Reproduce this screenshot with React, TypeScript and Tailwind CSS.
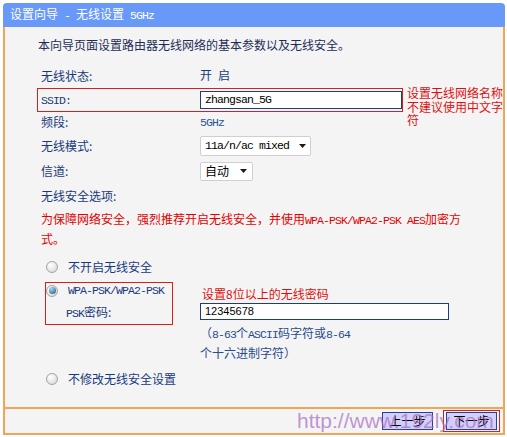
import type { ReactNode } from "react"

function M({ children }: { children: ReactNode }) {
    return <span className="whitespace-pre font-['Liberation_Mono',monospace] text-[11.5px] tracking-[-0.9px]">{children}</span>
}

function Radio({ checked }: { checked?: boolean }) {
    return (
        <span className="w-[12px] h-[12px] rounded-full border border-[#a3a3a3] bg-[radial-gradient(circle_at_35%_30%,#ffffff,#d2d2d2)] flex items-center justify-center shrink-0">
            {checked && <span className="w-[7px] h-[7px] rounded-full bg-[radial-gradient(circle_at_35%_30%,#9fdcf5,#1b4d72)]" />}
        </span>
    )
}

function Arrow() {
    return (
        <svg width="7" height="4" viewBox="0 0 7 4" className="shrink-0">
            <polygon points="0,0 7,0 3.5,4" fill="#1a1a1a" />
        </svg>
    )
}

function Row({ label, children, h }: { label: ReactNode; children?: ReactNode; h: string }) {
    return (
        <div className={`flex items-center pl-[36px] ${h}`}>
            <div className="w-[159px] shrink-0 text-[#183a7c]">{label}</div>
            {children}
        </div>
    )
}

function Button({ text }: { text: string }) {
    return (
        <div className="w-[51px] h-[18px] border border-[#2b3f97] bg-[#d2d0fa] flex items-center justify-center text-black leading-none">
            {text}
        </div>
    )
}

export default function App() {
    return (
        <div className="w-[507px] h-[437px] bg-white pt-[3px] pl-[3px] pr-[2px] font-['Noto_Sans_CJK_SC',sans-serif] text-[12px] leading-none">
            <div className="h-[24px] rounded-t-[4px] bg-[#6899f8] text-white pl-[7px] flex items-center">
                <span>设置向导<M> - </M>无线设置<M> 5GHz</M></span>
            </div>

            <div className="border-x-2 border-b-2 border-[#f2a654] bg-[#f4f4f4]">
                <div className="h-[382px] border-b-2 border-[#f2a654] pt-[6px] flex flex-col">
                    <div className="h-[24px] flex items-center pl-[33px] text-[#1d2c58]">
                        本向导页面设置路由器无线网络的基本参数以及无线安全。
                    </div>

                    <div className="mt-[7px]">
                        <Row label="无线状态:" h="h-[24px]">
                            <span className="text-[#183a7c]">开<M> </M>启</span>
                        </Row>
                    </div>

                    <div className="flex h-[24px]">
                        <div className="ml-[32px] w-[367px] h-[24px] border border-[#d62020] pl-[3px] flex items-center">
                            <div className="w-[159px] shrink-0 text-[#183a7c]"><M>SSID:</M></div>
                            <div className="w-[202px] h-[18px] border border-[#1e3d7c] bg-white flex items-center pl-[4px] text-black">
                                <M>zhangsan_5G</M>
                            </div>
                        </div>
                        <div className="ml-[4px] -mt-[2px] w-[97px] text-[#e01010] leading-[13.5px] self-start">
                            设置无线网络名称不建议使用中文字符
                        </div>
                    </div>

                    <Row label="频段:" h="h-[20px]">
                        <span className="text-[#2a5596]"><M>5GHz</M></span>
                    </Row>

                    <Row label="无线模式:" h="h-[28px]">
                        <div className="w-[111px] h-[20px] border border-[#cfcfcf] rounded-[2px] bg-white flex items-center justify-between pl-[4px] pr-[4px] text-black">
                            <M>11a/n/ac mixed</M>
                            <Arrow />
                        </div>
                    </Row>

                    <Row label="信道:" h="h-[22px]">
                        <div className="w-[53px] h-[19px] border border-[#cfcfcf] rounded-[2px] bg-white flex items-center justify-between pl-[4px] pr-[5px] text-black">
                            自动
                            <Arrow />
                        </div>
                    </Row>

                    <Row label="无线安全选项:" h="h-[28px]" />

                    <div className="pl-[36px] w-[462px] leading-[18px] text-[#e40000]">
                        为保障网络安全，强烈推荐开启无线安全，并使用<M>WPA-PSK/WPA2-PSK AES</M>加密方式。
                    </div>

                    <div className="mt-[9px] h-[20px] pl-[41px] flex items-center gap-[10px] text-[#183a7c]">
                        <Radio />
                        不开启无线安全
                    </div>

                    <div className="mt-[5px] flex pl-[40px] h-[80px]">
                        <div className="w-[128px] h-[43px] border border-[#d62020] flex flex-col text-[#183a7c] shrink-0">
                            <div className="h-[15px] flex items-center gap-[10px]">
                                <Radio checked />
                                <M>WPA-PSK/WPA2-PSK</M>
                            </div>
                            <div className="mt-[4px] h-[22px] flex items-center pl-[20px]">
                                <span><M>PSK</M>密码:</span>
                            </div>
                        </div>
                        <div className="ml-[27px] mt-[4px] flex flex-col">
                            <div className="h-[18px] flex items-center pl-[2px] text-[#e01010]">
                                设置8位以上的无线密码
                            </div>
                            <div className="w-[249px] h-[18px] border border-[#1e3d7c] bg-white flex items-center pl-[4px] text-black font-['Liberation_Sans',sans-serif] text-[11px]">
                                12345678
                            </div>
                            <div className="mt-[4px] w-[156px] leading-[18px] text-[#2a4c8e]">
                                （<M>8-63</M>个<M>ASCII</M>码字符或<M>8-64</M>个十六进制字符）
                            </div>
                        </div>
                    </div>

                    <div className="mt-[7px] h-[20px] pl-[41px] flex items-center gap-[10px] text-[#183a7c]">
                        <Radio />
                        不修改无线安全设置
                    </div>
                </div>

                <div className="relative h-[24px] flex items-center justify-end gap-[10px] pr-[3px]">
                    <Button text="上一步" />
                    <div className="border border-[#d62020] px-[2px] py-[1px]">
                        <Button text="下一步" />
                    </div>
                    <div className="absolute left-[292px] top-[1px] pointer-events-none font-['Liberation_Sans',sans-serif] text-[21px] leading-none text-[rgba(165,105,195,0.7)]">
                        http://www.192ly.com
                    </div>
                </div>
            </div>
        </div>
    )
}
